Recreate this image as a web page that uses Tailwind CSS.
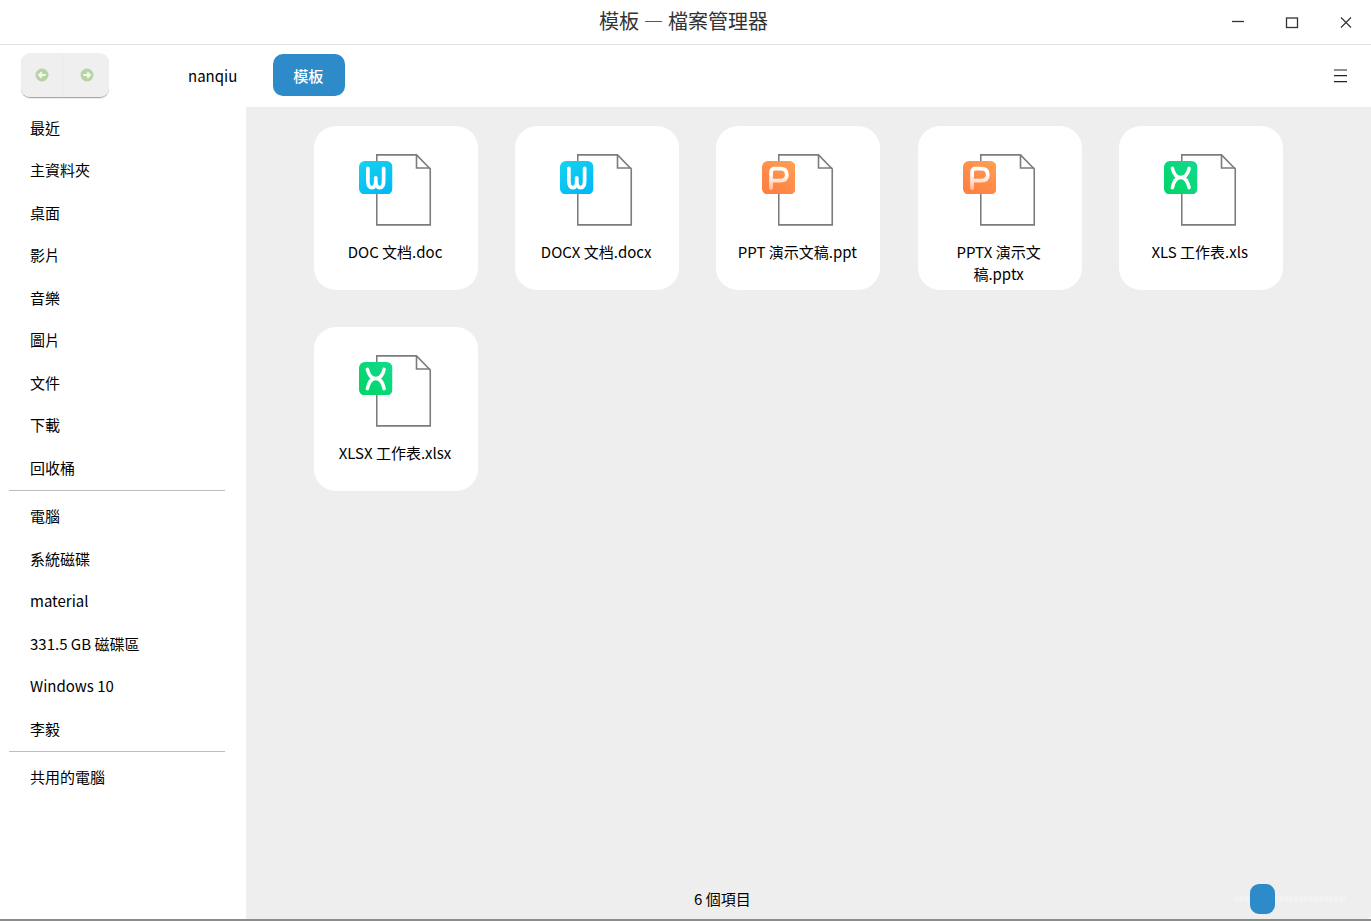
<!DOCTYPE html>
<html lang="zh-Hant">
<head>
    <meta charset="UTF-8">
    <meta name="viewport" content="width=device-width, initial-scale=1.0">
    <title>模板 — 檔案管理器</title>
    <script src="https://cdn.jsdelivr.net/npm/@tailwindcss/browser@4"></script>
</head>
<body class="bg-white overflow-hidden font-['Noto_Sans_CJK_TC','Noto_Sans',sans-serif] text-[15px] text-black">
    <svg class="absolute w-0 h-0">
        <defs>
            <linearGradient id="gradW" x1="0" y1="0" x2="0.6" y2="1"><stop offset="0" stop-color="#14d4ee"/><stop offset="1" stop-color="#04baf6"/></linearGradient>
            <linearGradient id="gradP" x1="1" y1="0" x2="0.3" y2="1"><stop offset="0" stop-color="#ffa254"/><stop offset="1" stop-color="#ff7e42"/></linearGradient>
            <linearGradient id="gradX" x1="1" y1="0" x2="0" y2="1"><stop offset="0" stop-color="#12da8f"/><stop offset="1" stop-color="#03d464"/></linearGradient>
            <linearGradient id="fadeP" gradientUnits="userSpaceOnUse" x1="0" y1="14" x2="0" y2="29"><stop offset="0" stop-color="#fff"/><stop offset="1" stop-color="#fff" stop-opacity="0.45"/></linearGradient>
        </defs>
        <symbol id="page" viewBox="0 0 56 72">
            <path d="M0.75 0.9H40.5L54.25 15V70.9H0.75Z" fill="#fff" stroke="#7c7c7c" stroke-width="1.6"/>
            <path d="M40.5 0.9V14H54.25" fill="none" stroke="#7c7c7c" stroke-width="1.6"/>
        </symbol>
        <symbol id="badgeW" viewBox="0 0 34 34">
            <rect width="34" height="34" rx="6" fill="url(#gradW)"/>
            <path d="M9 7.5V20Q9 27 13 27Q17 27 17 20V17V20Q17 27 21 27Q25 27 25 20V7.5" fill="none" stroke="#fff" stroke-width="3.8" stroke-linecap="round" stroke-linejoin="round"/>
        </symbol>
        <symbol id="badgeP" viewBox="0 0 34 34">
            <rect width="34" height="34" rx="6" fill="url(#gradP)"/>
            <path d="M9.2 27.5V11.5Q9.2 7.7 13 7.7H18.5Q25.2 7.7 25.2 14Q25.2 20 18.5 20H10" fill="none" stroke="url(#fadeP)" stroke-width="3.8" stroke-linecap="round" stroke-linejoin="round"/>
        </symbol>
        <symbol id="badgeX" viewBox="0 0 34 34">
            <rect width="34" height="34" rx="6" fill="url(#gradX)"/>
            <path d="M8.5 7.5C10 14 13 16.8 17 16.8C21 16.8 24 14 25.5 7.5M8.5 27C10 20 13 16.8 17 16.8C21 16.8 24 20 25.5 27" fill="none" stroke="#fff" stroke-width="3.6" stroke-linecap="round"/>
        </symbol>
    </svg>

    <div class="flex flex-col h-[921px] w-[1371px]">
        <!-- titlebar -->
        <header class="grid grid-cols-[1fr_auto_1fr] items-center h-[45px] shrink-0 border-b border-[#e2e2e2] text-[#333]">
            <div></div>
            <h1 class="text-[20px] leading-[41px] mr-[4px] mb-[4px]">模板 — 檔案管理器</h1>
            <div class="flex items-center justify-end gap-[40px] pr-[18px]">
                <svg class="w-[14px] h-[14px]" viewBox="0 0 14 14"><path d="M1 5.5H13" stroke="#333" stroke-width="1.3"/></svg>
                <svg class="w-[14px] h-[14px]" viewBox="0 0 14 14"><rect x="1.5" y="2" width="11" height="9.5" fill="none" stroke="#333" stroke-width="1.3"/></svg>
                <svg class="w-[14px] h-[14px]" viewBox="0 0 14 14"><path d="M2 1.5L12 11.5M12 1.5L2 11.5" stroke="#333" stroke-width="1.2"/></svg>
            </div>
        </header>

        <!-- toolbar -->
        <div class="flex items-center h-[62px] shrink-0 pl-[21px] pr-[24px] pb-[2px]">
            <div class="flex w-[88px] h-[45px] rounded-[9px] bg-[#efefef] border-b border-[#aaaaaa] shadow-[0_1px_1px_rgba(0,0,0,0.08)]">
                <button class="flex w-[43px] items-center justify-center border-r border-[#ececec]">
                    <svg class="w-[14px] h-[14px]" viewBox="0 0 14 14"><circle cx="7" cy="7" r="6.5" fill="#b6d3a6"/><path d="M10.8 7H4.2M6.8 4.2L4 7L6.8 9.8" fill="none" stroke="#f4f7ee" stroke-width="2"/></svg>
                </button>
                <button class="flex flex-1 items-center justify-center">
                    <svg class="w-[14px] h-[14px]" viewBox="0 0 14 14"><circle cx="7" cy="7" r="6.5" fill="#b6d3a6"/><path d="M3.2 7H9.8M7.2 4.2L10 7L7.2 9.8" fill="none" stroke="#f4f7ee" stroke-width="2"/></svg>
                </button>
            </div>
            <span class="ml-[79px] mt-[2px]">nanqiu</span>
            <button class="ml-[36px] w-[72px] h-[42px] pt-[2px] pr-[2px] rounded-[10px] bg-[#2e8bc9] text-white font-medium">模板</button>
            <svg class="ml-auto mt-[2px] w-[14px] h-[14px]" viewBox="0 0 14 14"><path d="M1 1H14M1 6.7H14M1 12.7H14" stroke="#222" stroke-width="1.2"/></svg>
        </div>

        <div class="flex flex-1 min-h-0">
            <!-- sidebar -->
            <nav class="w-[246px] shrink-0 flex flex-col">
                <a class="flex items-center h-[42.5px] pl-[30px] pb-[0.2px]">最近</a>
                <a class="flex items-center h-[42.5px] pl-[30px] pb-[0.2px]">主資料夾</a>
                <a class="flex items-center h-[42.5px] pl-[30px] pb-[0.2px]">桌面</a>
                <a class="flex items-center h-[42.5px] pl-[30px] pb-[0.2px]">影片</a>
                <a class="flex items-center h-[42.5px] pl-[30px] pb-[0.2px]">音樂</a>
                <a class="flex items-center h-[42.5px] pl-[30px] pb-[0.2px]">圖片</a>
                <a class="flex items-center h-[42.5px] pl-[30px] pb-[0.2px]">文件</a>
                <a class="flex items-center h-[42.5px] pl-[30px] pb-[0.2px]">下載</a>
                <a class="flex items-center h-[42.5px] pl-[30px] pb-[0.2px]">回收桶</a>
                <div class="h-px bg-[#bdbdbd] ml-[9px] w-[216px] mb-[5px]"></div>
                <a class="flex items-center h-[42.5px] pl-[30px] pb-[0.2px]">電腦</a>
                <a class="flex items-center h-[42.5px] pl-[30px] pb-[0.2px]">系統磁碟</a>
                <a class="flex items-center h-[42.5px] pl-[30px] pb-[0.2px]">material</a>
                <a class="flex items-center h-[42.5px] pl-[30px] pb-[0.2px]">331.5 GB 磁碟區</a>
                <a class="flex items-center h-[42.5px] pl-[30px] pb-[0.2px]">Windows 10</a>
                <a class="flex items-center h-[42.5px] pl-[30px] pb-[0.2px]">李毅</a>
                <div class="h-px bg-[#bdbdbd] ml-[9px] w-[216px] mb-[5px]"></div>
                <a class="flex items-center h-[42.5px] pl-[30px] pb-[0.2px]">共用的電腦</a>
            </nav>

            <!-- files -->
            <main class="flex-1 flex flex-col bg-[#eeeeee] rounded-br-[4px]">
                <div class="flex-1 grid grid-cols-[repeat(5,164px)] auto-rows-[164px] gap-x-[37.2px] gap-y-[37px] content-start pl-[68px] pt-[19px]">
                    <div class="bg-white rounded-[22px] flex flex-col items-center">
                        <div class="relative w-[56px] h-[72px] mt-[28px] ml-[16px]">
                            <svg class="w-[56px] h-[72px]"><use href="#page"/></svg>
                            <svg class="absolute left-[-16.75px] top-[6.75px] w-[33.5px] h-[33.5px]"><use href="#badgeW"/></svg>
                        </div>
                        <p class="w-[126px] mt-[15px] mr-[2px] text-center leading-[22px]">DOC 文档.doc</p>
                    </div>
                    <div class="bg-white rounded-[22px] flex flex-col items-center">
                        <div class="relative w-[56px] h-[72px] mt-[28px] ml-[16px]">
                            <svg class="w-[56px] h-[72px]"><use href="#page"/></svg>
                            <svg class="absolute left-[-16.75px] top-[6.75px] w-[33.5px] h-[33.5px]"><use href="#badgeW"/></svg>
                        </div>
                        <p class="w-[126px] mt-[15px] mr-[2px] text-center leading-[22px]">DOCX 文档.docx</p>
                    </div>
                    <div class="bg-white rounded-[22px] flex flex-col items-center">
                        <div class="relative w-[56px] h-[72px] mt-[28px] ml-[16px]">
                            <svg class="w-[56px] h-[72px]"><use href="#page"/></svg>
                            <svg class="absolute left-[-16.75px] top-[6.75px] w-[33.5px] h-[33.5px]"><use href="#badgeP"/></svg>
                        </div>
                        <p class="w-[126px] mt-[15px] mr-[2px] text-center leading-[22px]">PPT 演示文稿.ppt</p>
                    </div>
                    <div class="bg-white rounded-[22px] flex flex-col items-center">
                        <div class="relative w-[56px] h-[72px] mt-[28px] ml-[16px]">
                            <svg class="w-[56px] h-[72px]"><use href="#page"/></svg>
                            <svg class="absolute left-[-16.75px] top-[6.75px] w-[33.5px] h-[33.5px]"><use href="#badgeP"/></svg>
                        </div>
                        <p class="w-[120px] mt-[15px] mr-[2px] text-center leading-[22px]">PPTX 演示文稿.pptx</p>
                    </div>
                    <div class="bg-white rounded-[22px] flex flex-col items-center">
                        <div class="relative w-[56px] h-[72px] mt-[28px] ml-[16px]">
                            <svg class="w-[56px] h-[72px]"><use href="#page"/></svg>
                            <svg class="absolute left-[-16.75px] top-[6.75px] w-[33.5px] h-[33.5px]"><use href="#badgeX"/></svg>
                        </div>
                        <p class="w-[126px] mt-[15px] mr-[2px] text-center leading-[22px]">XLS 工作表.xls</p>
                    </div>
                    <div class="bg-white rounded-[22px] flex flex-col items-center">
                        <div class="relative w-[56px] h-[72px] mt-[28px] ml-[16px]">
                            <svg class="w-[56px] h-[72px]"><use href="#page"/></svg>
                            <svg class="absolute left-[-16.75px] top-[6.75px] w-[33.5px] h-[33.5px]"><use href="#badgeX"/></svg>
                        </div>
                        <p class="w-[126px] mt-[15px] mr-[2px] text-center leading-[22px]">XLSX 工作表.xlsx</p>
                    </div>
                </div>

                <!-- status bar -->
                <footer class="flex items-center h-[30px] mb-[5px] shrink-0">
                    <span class="ml-[448px]">6 個項目</span>
                    <div class="ml-[483px] flex items-center w-[112px] h-[6px] bg-[repeating-linear-gradient(90deg,#f2f2f2_0_4px,#eeeeee_4px_5px)]">
                        <div class="ml-[16px] w-[25px] h-[30px] shrink-0 rounded-[9px] bg-[#2e8bc9]"></div>
                    </div>
                </footer>
            </main>
        </div>
        <div class="h-[2px] shrink-0 bg-[#8c8c8c]"></div>
    </div>
</body>
</html>
